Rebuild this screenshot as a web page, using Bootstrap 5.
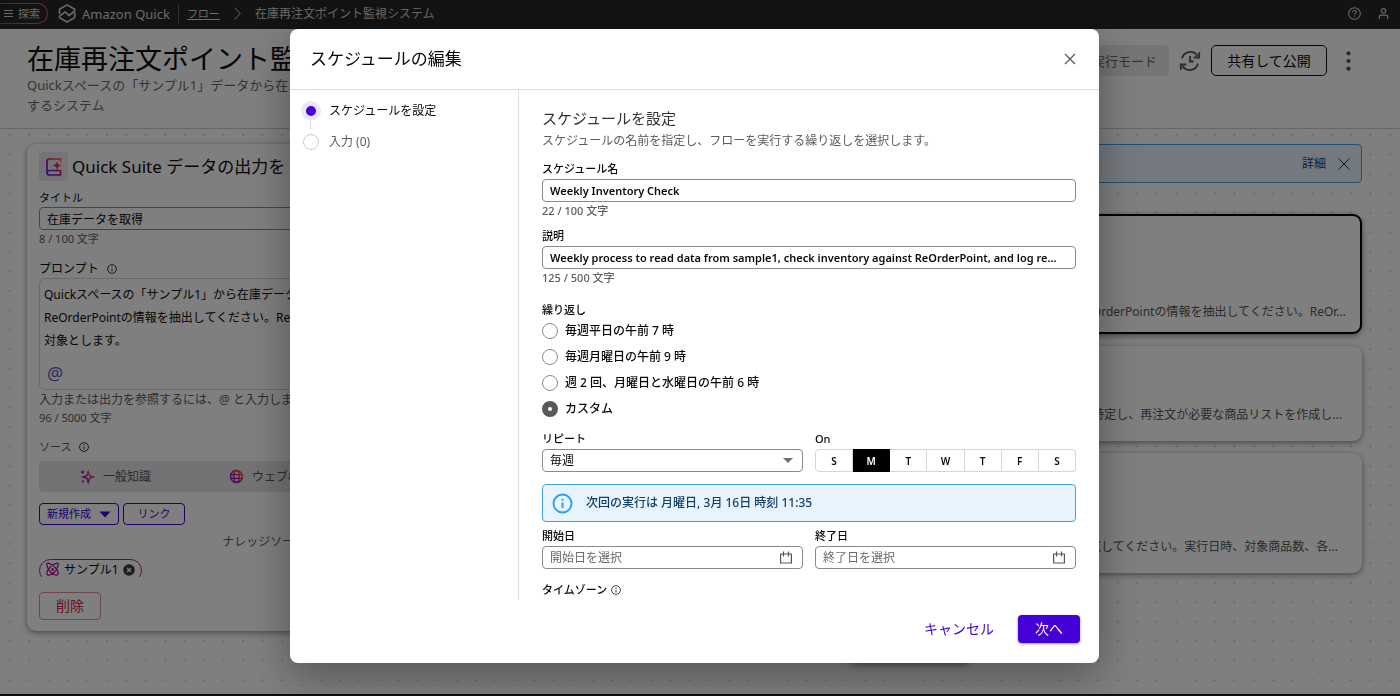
<!DOCTYPE html>
<html lang="ja">
<head>
<meta charset="utf-8">
<meta name="viewport" content="width=device-width, initial-scale=1">
<title>在庫再注文ポイント監視システム</title>
<link href="https://cdn.jsdelivr.net/npm/bootstrap@5.3.0/dist/css/bootstrap.min.css" rel="stylesheet">
<style>
  :root { --brand: #4400d6; --ink: #0a0a0a; --soft: #5c5c5c; --edge: #8a8a8a; }
  body { font-family: "Noto Sans", "Noto Sans CJK JP", sans-serif; font-size: 12px; line-height: 18px; color: var(--ink); }
  svg { display: block; flex-shrink: 0; }
  button, input, select { font-family: inherit; color: inherit; }

  /* page behind the dialog */
  .shell { border-bottom: 2px solid #1a1c1a; }
  .topbar { height: 29px; background: #262626; color: #d4d4d4; padding: 0 10px 2px 0; }
  .explore { height: 21px; gap: 5px; padding: 0 7px 0 4px; font-size: 11px; border: 1px solid transparent; border-left: 0; border-radius: 0 11px 11px 0;
    background: linear-gradient(#262626, #262626) padding-box, linear-gradient(90deg, #7a3fd0, #d0507a, #c8684a) border-box; color: inherit; }
  .product { font-size: 13px; }
  .rule { width: 1px; height: 19px; background: #666; }
  .crumb { gap: 14px; }
  .crumb a { font-size: 11px; }
  .flowhead { min-height: 100px; padding: 14px 46px 12px 27px; border-bottom: 1px solid #ccc; }
  .flowhead h1 { font-size: 27px; line-height: 32px; margin-bottom: 0; font-weight: 400; }
  .flowhead p { font-size: 13px; line-height: 20px; color: #6a6a6a; margin: 0; }
  .intro { flex: 0 0 310px; }
  .tools { padding-top: 2px; }
  .mode { height: 31px; padding: 0 12px; border-radius: 5px; background: #ebebeb; color: #666; font-size: 13px; }
  .share { width: 116px; height: 31px; border: 1px solid #111; border-radius: 5px; background: #fff; font-size: 14px; line-height: 24px; }
  .canvas { padding: 15px 38px 61px 27px; gap: 24px; background: radial-gradient(circle at 10px 6px, #ccc 0, #ccc 1px, transparent 1px) 0 0 / calc(100% / 72) calc(100% / 29) #fff; }
  .panel { background: #fff; border-radius: 9px; box-shadow: 0 2px 6px rgba(0,0,0,.4), 0 0 2px rgba(0,0,0,.15); }
  .editor { flex: 0 0 474px; padding: 8px 12px 11px; }
  .editor h2 { font-size: 17px; line-height: 29px; margin: 0; font-weight: 400; }
  .tile { width: 29px; height: 29px; border-radius: 4px; background: linear-gradient(90deg, #e6e2f8, #f8e6e6); }
  .cap { font-size: 11px; line-height: 17px; display: block; margin-bottom: 2px; }
  .editor .cap { margin-bottom: 1px; }
  .note { font-size: 11px; line-height: 17px; color: var(--soft); }
  .hint { color: var(--soft); white-space: nowrap; }
  .line { height: 23px; width: 100%; border: 1px solid var(--edge); border-radius: 4px; padding: 0 7px; background: #fff; font-size: 12px; line-height: 20px; text-overflow: ellipsis; }
  .line::placeholder { color: #6a6a6a; opacity: 1; }
  .prompt-cap { margin: 13px 0 0; }
  .prompt { height: 112px; border: 1px solid #d4d4d4; border-radius: 6px; padding: 4px; margin-bottom: 1px; }
  .prompt p { line-height: 23px; margin: 0; white-space: nowrap; }
  .at { border: 0; background: none; padding: 0 3px; margin-top: 9px; font-size: 18px; line-height: 24px; color: #6a4fd0; }
  .tabs { height: 31px; border-radius: 4px; background: #e6e6e6; color: #555; margin-top: 6px; padding-left: 41px; gap: 78px; }
  .makers { margin-top: 11px; }
  .mini { height: 22px; border: 1px solid var(--brand); border-radius: 4px; background: #fff; color: var(--brand); font-size: 11px; line-height: 18px; padding: 0 7px; min-width: 62px; }
  .chipbox { height: 18px; overflow: hidden; }
  .chip { height: 23px; border: 1px solid #b0128c; border-radius: 12px; padding: 0 6px 2px 5px; }
  .remove { width: 62px; height: 28px; border: 1px solid #e08a98; border-radius: 4px; color: #d02848; background: #fff; font-size: 14px; margin-top: 15px; }
  .steps { gap: 12px; }
  .info { border: 1px solid #3f9fe8; border-radius: 4px; background: #e7f3fd; color: #143f66; }
  .notice { height: 39px; padding: 0 11px; margin-bottom: 19px; }
  .stepcard { height: 95px; padding: 0 16px 17px; color: #555; white-space: nowrap; }
  .stepcard.tall { height: 120px; padding-bottom: 17px; }
  .stepcard.picked { border: 2px solid #000; padding: 0 14px 11px; }
  .dock { bottom: 34px; left: calc(50% + 149px); width: 122px; height: 40px; border-radius: 8px; box-shadow: 0 3px 10px rgba(0,0,0,.6); }

  /* dialog */
  .modal { padding-right: 11px; --bs-modal-width: 809px; }
  .modal-dialog { margin: 29px auto; max-width: 809px; }
  .modal-content { border: 0; border-radius: 8px; box-shadow: 0 12px 44px rgba(0,0,0,.35); color: var(--ink); }
  .modal-header { height: 61px; padding: 0 20px; border-color: #dcdcdc; }
  .modal-header h2 { font-size: 17px; margin: 0; font-weight: 400; }
  .icon-btn { border: 0; background: none; padding: 0; color: #555; }
  .modal-body { padding: 0; min-height: 509px; }
  .stepnav { flex: 0 0 229px; padding: 12px 11px; border-right: 1px solid #dcdcdc; }
  .stepnav li { height: 31px; gap: 8px; }
  .stepnav li::before { content: ""; width: 16px; height: 16px; margin: 1px 2px; border-radius: 50%; border: 1px solid #ccc; flex: none; }
  .stepnav li.now::before { width: 20px; height: 20px; margin: -1px 0 0; border: 5px solid #ece5fb; background: var(--brand); }
  .stepnav li.now::after { content: ""; position: absolute; left: 9px; top: 19px; width: 1px; height: 9px; background: #dcdcdc; }
  .fields { padding: 18px 23px 0; font-weight: 500; }
  .fields h3 { font-size: 15px; line-height: 20px; margin-bottom: 4px; font-weight: 400; color: #333; }
  .fields .desc { margin-bottom: 10px; color: #5c5c5c; font-weight: 400; }
  .gap-a { margin-top: 8px; }
  .gap-b { margin-top: 12px; }
  .repeat-cap { margin: 15px 0 0; }
  .latin { font-size: 11px; font-weight: 600; padding-right: 12px; }
  .pair { display: grid; grid-template-columns: 1fr 1fr; gap: 12px; }
  .choice { height: 26px; gap: 7px; }
  .choice input { appearance: none; width: 16px; height: 16px; margin: 0; border: 1px solid var(--edge); border-radius: 50%; background: #fff; }
  .choice input:checked { border: 6px solid #595959; }
  .pick { appearance: none; background: url("data:image/svg+xml,%3Csvg xmlns='http://www.w3.org/2000/svg' width='10' height='6'%3E%3Cpath d='M0 0h10L5 5z' fill='%23707070'/%3E%3C/svg%3E") no-repeat right 9px center #fff; }
  .days { height: 23px; }
  .days button { border: 1px solid #d6d6d6; background: #fff; font-size: 10px; line-height: 20px; font-weight: 600; padding: 0; flex: 1 1 0; }
  .days button + button { border-left: 0; }
  .days button:first-child { border-radius: 4px 0 0 4px; }
  .days button:last-child { border-radius: 0 4px 4px 0; }
  .days button.on { background: #000; border-color: #000; color: #fff; }
  .next-run { height: 38px; padding: 0 9px; gap: 13px; margin-bottom: 5px; }
  .datebox input { padding-right: 28px; }
  .datebox svg { position: absolute; right: 11px; top: 5px; }
  .modal-footer { border: 0; padding: 15px 19px 20px; gap: 24px; }
  .modal-footer > * { margin: 0; }
  .next { width: 62px; height: 28px; border: 0; border-radius: 4px; background: var(--brand); color: #fff; font-size: 14px; line-height: 22px; box-shadow: 0 1px 3px rgba(0,0,0,.4); }
  .cancel { border: 0; background: none; padding: 0; color: var(--brand); font-size: 14px; line-height: 22px; }
</style>
</head>
<body>
<div class="shell min-vh-100 d-flex flex-column overflow-hidden">
  <nav class="topbar d-flex align-items-center">
    <button class="explore d-flex align-items-center" type="button">
      <svg width="9" height="9" viewBox="0 0 9 9" stroke="currentColor"><path d="M0 1.500h9M0 4.500h9M0 7.500h9"/></svg>探索
    </button>
    <svg class="ms-2" width="22" height="21" viewBox="0 0 22 21" fill="none" stroke="currentColor" stroke-width="1.600" stroke-linejoin="round"><path d="M3.500 11V6.200L11 1.900l7.700 4.300V8l-5.800 4.500-3.600-3.600L3.500 13.200v1.400l7.500 4.400 7.700-4.400V9.500"/></svg>
    <span class="product ms-1">Amazon Quick</span>
    <span class="rule mx-2"></span>
    <span class="crumb d-flex align-items-center">
      <a href="#" class="text-reset">フロー</a>
      <svg width="7" height="13" viewBox="0 0 7 13" fill="none" stroke="currentColor"><path d="M.7.700 6.200 6.500.700 12.300"/></svg>
      <span>在庫再注文ポイント監視システム</span>
    </span>
    <button class="icon-btn text-reset ms-auto me-3" type="button" aria-label="ヘルプ"><svg width="13" height="13" viewBox="0 0 13 13" fill="none" stroke="currentColor" stroke-width="1.100"><circle cx="6.500" cy="6.500" r="5.800"/><path d="M4.700 5.200c0-2.400 3.700-2.300 3.600 0 0 1.200-1.800 1.200-1.800 2.400M6.500 8.600v1.200"/></svg></button>
    <button class="icon-btn text-reset" type="button" aria-label="アカウント"><svg width="13" height="13" viewBox="0 0 13 13" fill="none" stroke="currentColor" stroke-width="1.200"><circle cx="6.500" cy="3.800" r="2.200"/><path d="M2.300 12V9.800q0-1.600 1.600-1.600h5.200q1.600 0 1.600 1.600V12"/></svg></button>
  </nav>

  <header class="flowhead d-flex justify-content-between align-items-start">
    <div class="intro">
      <h1 class="text-nowrap">在庫再注文ポイント監</h1>
      <p class="text-nowrap">Quickスペースの「サンプル1」データから在<br>するシステム</p>
    </div>
    <div class="tools d-flex align-items-center">
      <span class="mode d-flex align-items-center">実行モード</span>
      <svg class="mx-2" width="26" height="22" viewBox="0 0 26 22" fill="none" stroke="#555" stroke-width="1.800"><path d="M5 8.500A8.500 8.500 0 0 1 20.500 6M22.200 2v5.500h-5.500M21 13.500A8.500 8.500 0 0 1 5.500 16M3.800 20v-5.500h5.500M13 6v5.500h3.500"/></svg>
      <button class="share" type="button">共有して公開</button>
      <button class="icon-btn ms-3" type="button" aria-label="その他"><svg width="11" height="20" viewBox="0 0 11 20" fill="#555"><circle cx="5.500" cy="2.300" r="2.100"/><circle cx="5.500" cy="10" r="2.100"/><circle cx="5.500" cy="17.700" r="2.100"/></svg></button>
    </div>
  </header>

  <main class="canvas d-flex flex-grow-1 align-items-start position-relative">
    <section class="panel editor overflow-hidden">
      <div class="d-flex gap-1 mb-2">
        <span class="tile d-flex align-items-center justify-content-center">
          <svg width="18" height="20" viewBox="0 0 18 20" fill="none" stroke="url(#warm)" stroke-width="1.700"><defs><linearGradient id="warm" gradientUnits="userSpaceOnUse" x1="2" y1="16" x2="14" y2="3"><stop stop-color="#3b2de8"/><stop offset=".5" stop-color="#b0109c"/><stop offset="1" stop-color="#ff5a2a"/></linearGradient></defs><path d="M15.500 4.500V2H4.500Q2 2 2 4.500v11Q2 18 4.500 18h11v-5M2.200 15.500q.3-2 2.300-2h11"/><path d="M12 5l1.100 2.600L16 8.500l-2.900 1L12 12l-1-2.500-2.800-1 2.800-.9z" fill="url(#warm)" stroke-width=".5"/></svg>
        </span>
        <h2 class="text-nowrap">Quick Suite データの出力を</h2>
      </div>
      <label class="cap" for="stepTitle">タイトル</label>
      <input class="line" id="stepTitle" value="在庫データを取得">
      <div class="note">8 / 100 文字</div>
      <div class="prompt-cap d-flex align-items-center gap-2">プロンプト
        <svg width="10" height="10" viewBox="0 0 10 10" fill="none" stroke="#333"><circle cx="5" cy="5" r="4.400"/><path d="M5 4.500v3M5 2.300v1.200"/></svg></div>
      <div class="prompt">
        <p>Quickスペースの「サンプル1」から在庫データを</p>
        <p>ReOrderPointの情報を抽出してください。ReOr</p>
        <p>対象とします。</p>
        <button class="at" type="button">@</button>
      </div>
      <div class="hint">入力または出力を参照するには、@ と入力します</div>
      <div class="note">96 / 5000 文字</div>
      <div class="note d-flex align-items-center gap-2 gap-b">ソース
        <svg width="10" height="10" viewBox="0 0 10 10" fill="none" stroke="#333"><circle cx="5" cy="5" r="4.400"/><path d="M5 4.500v3M5 2.300v1.200"/></svg></div>
      <div class="tabs d-flex align-items-center">
        <span class="d-flex align-items-center gap-2"><svg width="15" height="15" viewBox="0 0 15 15" fill="none" stroke="url(#warm)" stroke-width="1.400"><path d="M8.200 2.800 9.500 6.700l3.900 1.300-3.900 1.300-1.300 3.900-1.300-3.900L3 8l3.900-1.300z"/><circle cx="2.500" cy="3" r=".8" fill="#b0109c"/><path d="M3 11.500v2M2 12.500h2"/></svg>一般知識</span>
        <span class="d-flex align-items-center gap-2"><svg width="15" height="15" viewBox="0 0 15 15" fill="none" stroke="url(#warm)" stroke-width="1.400"><circle cx="7.500" cy="7.500" r="6"/><ellipse cx="7.500" cy="7.500" rx="2.700" ry="6"/><path d="M1.500 5.600h12M1.500 9.400h12"/></svg>ウェブ検索</span>
      </div>
      <div class="makers d-flex gap-1">
        <button class="mini d-flex align-items-center" type="button">新規作成<svg class="ms-2" width="12" height="7" viewBox="0 0 12 7" fill="currentColor"><path d="M.5.500h11L6 6.500z"/></svg></button>
        <button class="mini" type="button">リンク</button>
      </div>
      <div class="hint text-center mt-2">ナレッジソース</div>
      <div class="chipbox mt-2"><span class="chip d-inline-flex align-items-center gap-1">
        <svg width="15" height="15" viewBox="0 0 15 15" fill="none" stroke="#b0128c" stroke-width="1.300"><path d="M2 2.500Q1 1 3.500 1.200 8 2.500 11.500 7q3.500 5-.2 6.500Q7 12 4 8.500 1.800 5 2 2.500zM13 2.500q1-1.500-1.500-1.300Q7 2.500 3.500 7q-3.500 5 .2 6.500Q8 12 11 8.500q2.200-3.500 2-6z"/><circle cx="7.500" cy="7.500" r=".8"/></svg>サンプル1
        <svg width="12" height="12" viewBox="0 0 12 12"><circle cx="6" cy="6" r="5.800" fill="#3a3a3a"/><path d="m4 4 4 4M8 4 4 8" stroke="#fff" stroke-width="1.300"/></svg></span></div>
      <button class="remove" type="button">削除</button>
    </section>
    <section class="steps flex-grow-1 d-flex flex-column">
      <div class="info notice d-flex align-items-center justify-content-end gap-2"><a href="#" class="text-reset text-decoration-none me-1">詳細</a>
        <button class="icon-btn text-reset" type="button" aria-label="閉じる"><svg width="12" height="12" viewBox="0 0 12 12" stroke="currentColor"><path d="m.7.700 10.600 10.600M11.300.700.700 11.300"/></svg></button></div>
      <div class="panel stepcard tall picked d-flex align-items-end justify-content-end"><span>OrderPointの情報を抽出してください。ReOr...</span></div>
      <div class="panel stepcard d-flex align-items-end justify-content-end"><span class="pe-1">特定し、再注文が必要な商品リストを作成し...</span></div>
      <div class="panel stepcard tall d-flex align-items-end justify-content-end"><span class="pe-2">成してください。実行日時、対象商品数、各...</span></div>
    </section>
    <div class="dock position-absolute"></div>
  </main>
</div>

<div class="modal-backdrop show"></div>
<div class="modal show d-block" role="dialog" aria-modal="true" aria-labelledby="dlgTitle" tabindex="-1">
  <div class="modal-dialog">
    <form class="modal-content">
      <div class="modal-header">
        <h2 id="dlgTitle">スケジュールの編集</h2>
        <button class="icon-btn" type="button" aria-label="閉じる"><svg width="18" height="14" viewBox="0 0 18 14" stroke="currentColor" stroke-width="1.200"><path d="m4 2 10 10M14 2 4 12"/></svg></button>
      </div>
      <div class="modal-body d-flex">
        <ol class="stepnav list-unstyled mb-0">
          <li class="now position-relative d-flex align-items-start"><span>スケジュールを設定</span></li>
          <li class="hint d-flex align-items-start"><span>入力 (0)</span></li>
        </ol>
        <div class="fields flex-grow-1">
          <h3>スケジュールを設定</h3>
          <p class="desc">スケジュールの名前を指定し、フローを実行する繰り返しを選択します。</p>
          <label class="cap" for="name">スケジュール名</label>
          <input class="line latin" id="name" value="Weekly Inventory Check">
          <div class="note">22 / 100 文字</div>
          <label class="cap gap-a" for="about">説明</label>
          <input class="line latin" id="about" value="Weekly process to read data from sample1, check inventory against ReOrderPoint, and log reorder items to the tracking sheet.">
          <div class="note">125 / 500 文字</div>
          <div class="cap repeat-cap">繰り返し</div>
          <label class="choice d-flex align-items-center"><input type="radio" name="rep">毎週平日の午前 7 時</label>
          <label class="choice d-flex align-items-center"><input type="radio" name="rep">毎週月曜日の午前 9 時</label>
          <label class="choice d-flex align-items-center"><input type="radio" name="rep">週 2 回、月曜日と水曜日の午前 6 時</label>
          <label class="choice d-flex align-items-center"><input type="radio" name="rep" checked>カスタム</label>
          <div class="pair gap-a">
            <div><label class="cap" for="every">リピート</label>
              <select class="line pick d-block" id="every"><option>毎週</option></select></div>
            <div><span class="cap" id="onLabel">On</span>
              <div class="days d-flex" role="group" aria-labelledby="onLabel"><button type="button">S</button><button type="button" class="on">M</button><button type="button">T</button><button type="button">W</button><button type="button">T</button><button type="button">F</button><button type="button">S</button></div></div>
          </div>
          <div class="info next-run gap-b d-flex align-items-center">
            <svg width="21" height="21" viewBox="0 0 21 21" fill="none" stroke="#2f9df0" stroke-width="1.900"><circle cx="10.500" cy="10.500" r="9"/><path d="M10.500 9.500v5.500M10.500 5.700v2.100"/></svg>
            <span>次回の実行は 月曜日, 3月 16日 時刻 11:35</span>
          </div>
          <div class="pair">
            <div><label class="cap" for="from">開始日</label>
              <div class="datebox position-relative"><input class="line d-block" id="from" placeholder="開始日を選択"><svg width="12" height="13" viewBox="0 0 12 13" fill="none" stroke="#555" stroke-width="1.200"><path d="M.6 3h10.800v9H.6zM3.500.500v5M8.500.500v5"/></svg></div></div>
            <div><label class="cap" for="to">終了日</label>
              <div class="datebox position-relative"><input class="line d-block" id="to" placeholder="終了日を選択"><svg width="12" height="13" viewBox="0 0 12 13" fill="none" stroke="#555" stroke-width="1.200"><path d="M.6 3h10.800v9H.6zM3.500.500v5M8.500.500v5"/></svg></div></div>
          </div>
          <div class="cap gap-b d-flex align-items-center gap-1">タイムゾーン
            <svg width="10" height="10" viewBox="0 0 10 10" fill="none" stroke="#444"><circle cx="5" cy="5" r="4.400"/><path d="M5 4.500v3M5 2.300v1.200"/></svg></div>
        </div>
      </div>
      <div class="modal-footer">
        <button class="cancel" type="button">キャンセル</button>
        <button class="next" type="button">次へ</button>
      </div>
    </form>
  </div>
</div>
<script src="https://cdn.jsdelivr.net/npm/bootstrap@5.3.0/dist/js/bootstrap.bundle.min.js"></script>
</body>
</html>
